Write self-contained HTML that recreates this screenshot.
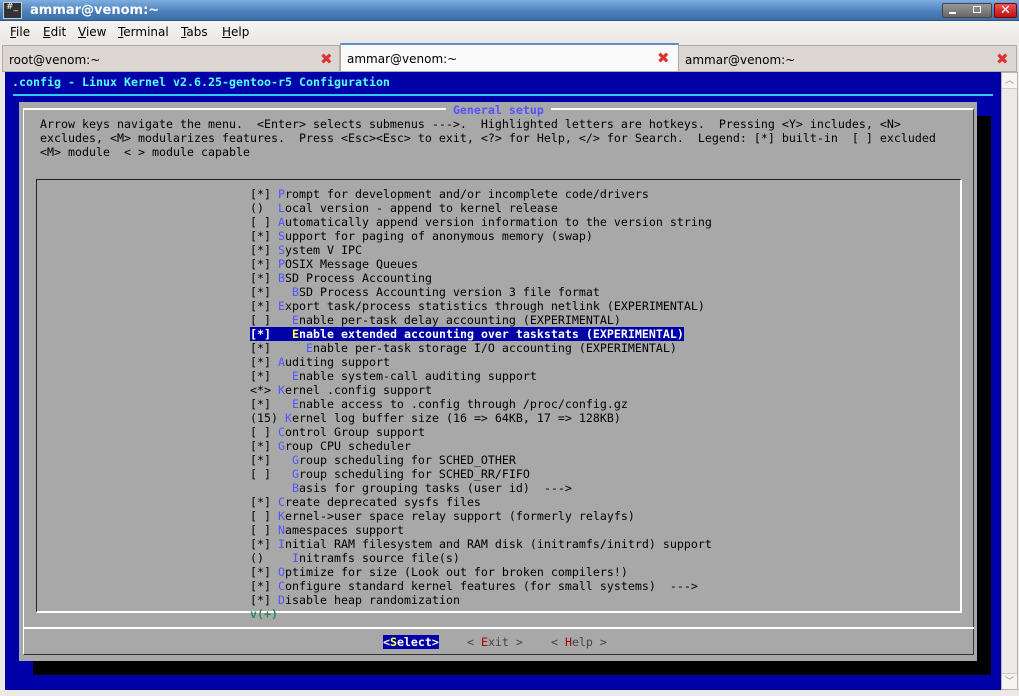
<!DOCTYPE html>
<html><head><meta charset="utf-8"><style>
*{margin:0;padding:0;box-sizing:border-box}
body{width:1019px;height:696px;background:#ece9e6;position:relative;overflow:hidden;font-family:"DejaVu Sans","Liberation Sans",sans-serif;font-size:12px}
.abs{position:absolute}
#tb{left:0;top:0;width:1019px;height:21px;background:linear-gradient(#7daee0,#4a7fb8 60%,#3c6fa8);border-bottom:1px solid #2d5587}
#mb{left:0;top:21px;width:1019px;height:22px;background:linear-gradient(#f6f4f2,#ebe7e4)}
.mi{position:absolute;top:25px;font-size:12px;color:#000}
.tab{position:absolute;top:45px;height:27px;background:#dcd6d3;border:1px solid #b0aaa6;font-size:12px;padding:7px 0 0 6px;color:#000}
.x{position:absolute;top:6px;color:#d33;font-weight:bold;font-size:15px;line-height:14px}
#term{left:5px;top:72px;width:996px;height:618px;background:#0000a8}
pre{position:absolute;left:5px;top:75px;font-family:"DejaVu Sans Mono","Liberation Mono",monospace;font-size:11.63px;line-height:14px;color:#000;white-space:pre}
.h{color:#5454ff}
.t{color:#55ffff;font-weight:bold}
.sel{background:#0000a8;color:#fff;font-weight:bold}
.y{color:#ffff54}
.r{color:#a80000}
.g{color:#2a8a5a;font-weight:bold}
.gb{color:#5454ff;font-weight:bold}
.dim{color:#444}
</style></head><body>
<div id="tb" class="abs"></div>
<div class="abs" style="left:3px;top:2px;width:19px;height:17px;background:#333;border:1px solid #ccc;color:#fff;font-size:9px;line-height:9px;padding-left:2px">#_</div>
<div class="abs" style="left:30px;top:3px;color:#fff;font-weight:bold;font-size:13px">ammar@venom:~</div>
<div class="abs" style="left:942px;top:3px;width:50px;height:15px;background:linear-gradient(#999,#666);border:1px solid #444;border-radius:2px"></div>
<div class="abs" style="left:949px;top:12px;width:7px;height:2px;background:#fff"></div>
<div class="abs" style="left:973px;top:6px;width:8px;height:7px;border:1.5px solid #fff"></div>
<div class="abs" style="left:994px;top:3px;width:23px;height:15px;background:linear-gradient(#e55,#b11);border:1px solid #700;border-radius:2px;color:#fff;font-weight:bold;text-align:center;font-size:13px;line-height:13px">✕</div>
<div id="mb" class="abs"></div>
<div class="mi" style="left:10px"><u>F</u>ile</div>
<div class="mi" style="left:43px"><u>E</u>dit</div>
<div class="mi" style="left:78px"><u>V</u>iew</div>
<div class="mi" style="left:118px"><u>T</u>erminal</div>
<div class="mi" style="left:181px"><u>T</u>abs</div>
<div class="mi" style="left:222px"><u>H</u>elp</div>
<div class="tab" style="left:2px;width:338px">root@venom:~<span class="x" style="left:317px">✖</span></div>
<div class="tab" style="left:340px;top:43px;height:29px;width:339px;background:#fbfafa;border-top:2px solid #5a8fd0">ammar@venom:~<span class="x" style="left:316px">✖</span></div>
<div class="tab" style="left:678px;width:339px">ammar@venom:~<span class="x" style="left:317px">✖</span></div>
<div id="term" class="abs"></div>
<div class="abs" style="left:1001px;top:72px;width:17px;height:618px;background:#eeeae7;border:1px solid #b8b2ae"></div>
<div class="abs" style="left:1002px;top:73px;width:15px;height:16px;background:#f7f5f3;border-bottom:1px solid #ccc;font-size:9px;color:#888;text-align:center">︿</div>
<div class="abs" style="left:1002px;top:673px;width:15px;height:16px;background:#f7f5f3;border-top:1px solid #ccc;font-size:9px;color:#888;text-align:center">﹀</div>
<div class="abs" style="left:0;top:690px;width:1019px;height:6px;background:#ece9e6"></div>
<div class="abs" style="left:13px;top:94px;width:980px;height:2px;background:#33c8ff"></div>
<div class="abs" style="left:33px;top:116px;width:958px;height:559px;background:#000"></div>
<div class="abs" style="left:19px;top:102px;width:958px;height:559px;background:#a8a8a8"></div>
<div class="abs" style="left:23px;top:108px;width:951px;height:547px;border:2px solid #fff;border-right-color:#333;border-bottom-color:#333;border-width:2px 1px 1px 1px"></div>
<div class="abs" style="left:24px;top:627px;width:950px;height:2px;background:#fff"></div>
<div class="abs" style="left:36px;top:179px;width:926px;height:434px;border:1px solid #222;border-right:2px solid #fff;border-bottom:2px solid #fff"></div>
<pre><span class="t"> .config - Linux Kernel v2.6.25-gentoo-r5 Configuration</span>

                                                               <span class="gb" style="background:#a8a8a8"> General setup </span>
     Arrow keys navigate the menu.  &lt;Enter&gt; selects submenus ---&gt;.  Highlighted letters are hotkeys.  Pressing &lt;Y&gt; includes, &lt;N&gt;
     excludes, &lt;M&gt; modularizes features.  Press &lt;Esc&gt;&lt;Esc&gt; to exit, &lt;?&gt; for Help, &lt;/&gt; for Search.  Legend: [*] built-in  [ ] excluded
     &lt;M&gt; module  &lt; &gt; module capable


                                   [*] <span class="h">P</span>rompt for development and/or incomplete code/drivers
                                   ()  <span class="h">L</span>ocal version - append to kernel release
                                   [ ] <span class="h">A</span>utomatically append version information to the version string
                                   [*] <span class="h">S</span>upport for paging of anonymous memory (swap)
                                   [*] <span class="h">S</span>ystem V IPC
                                   [*] <span class="h">P</span>OSIX Message Queues
                                   [*] <span class="h">B</span>SD Process Accounting
                                   [*]   <span class="h">B</span>SD Process Accounting version 3 file format
                                   [*] <span class="h">E</span>xport task/process statistics through netlink (EXPERIMENTAL)
                                   [ ]   <span class="h">E</span>nable per-task delay accounting (EXPERIMENTAL)
                                   <span class="sel">[*]   <span class="y">E</span>nable extended accounting over taskstats (EXPERIMENTAL)</span>
                                   [*]     <span class="h">E</span>nable per-task storage I/O accounting (EXPERIMENTAL)
                                   [*] <span class="h">A</span>uditing support
                                   [*]   <span class="h">E</span>nable system-call auditing support
                                   &lt;*&gt; <span class="h">K</span>ernel .config support
                                   [*]   <span class="h">E</span>nable access to .config through /proc/config.gz
                                   (15) <span class="h">K</span>ernel log buffer size (16 =&gt; 64KB, 17 =&gt; 128KB)
                                   [ ] <span class="h">C</span>ontrol Group support
                                   [*] <span class="h">G</span>roup CPU scheduler
                                   [*]   <span class="h">G</span>roup scheduling for SCHED_OTHER
                                   [ ]   <span class="h">G</span>roup scheduling for SCHED_RR/FIFO
                                         <span class="h">B</span>asis for grouping tasks (user id)  ---&gt;
                                   [*] <span class="h">C</span>reate deprecated sysfs files
                                   [ ] <span class="h">K</span>ernel-&gt;user space relay support (formerly relayfs)
                                   [ ] <span class="h">N</span>amespaces support
                                   [*] <span class="h">I</span>nitial RAM filesystem and RAM disk (initramfs/initrd) support
                                   ()    <span class="h">I</span>nitramfs source file(s)
                                   [*] <span class="h">O</span>ptimize for size (Look out for broken compilers!)
                                   [*] <span class="h">C</span>onfigure standard kernel features (for small systems)  ---&gt;
                                   [*] <span class="h">D</span>isable heap randomization
                                   <span class="g">v(+)</span>

                                                      <span class="sel">&lt;<span class="y">S</span>elect&gt;</span>    <span class="dim">&lt; <span class="r">E</span>xit &gt;</span>    <span class="dim">&lt; <span class="r">H</span>elp &gt;</span></pre>
</body></html>
